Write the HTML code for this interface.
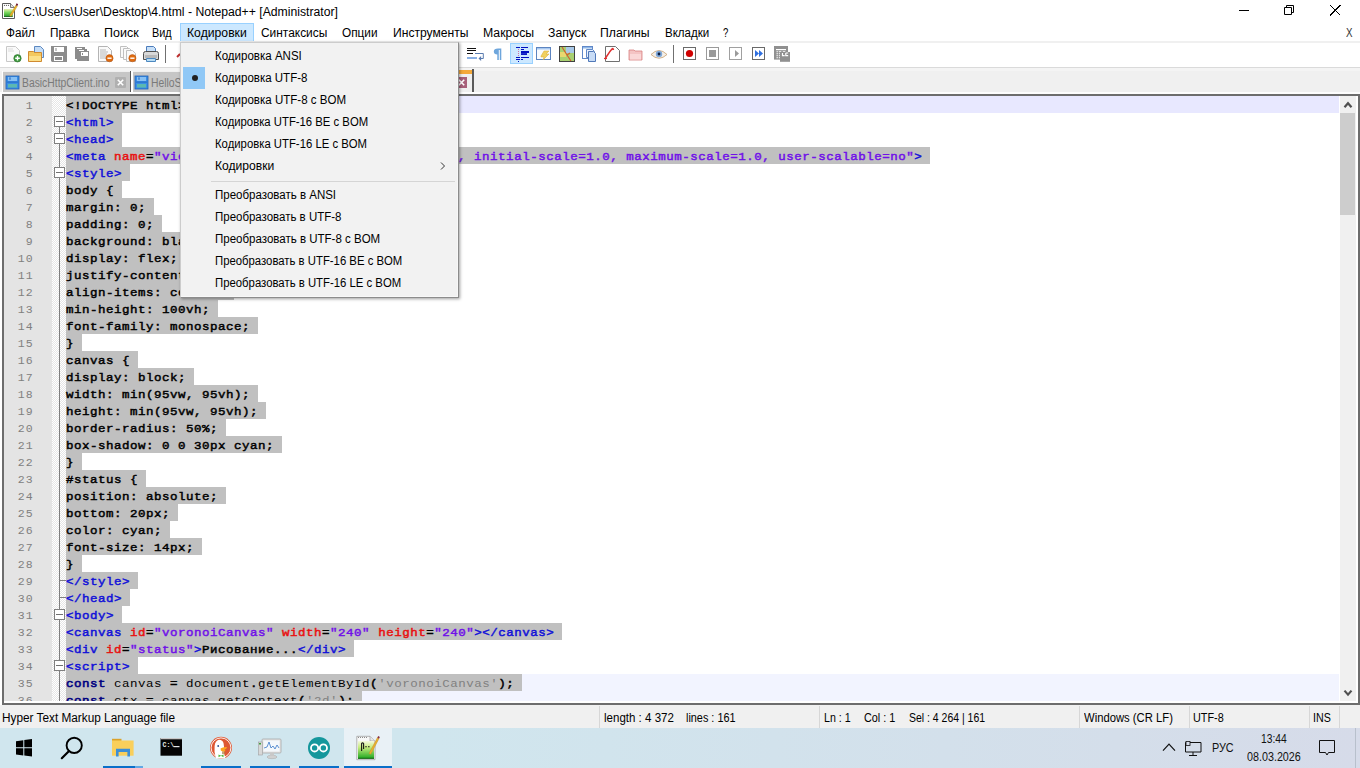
<!DOCTYPE html>
<html><head><meta charset="utf-8">
<style>
*{box-sizing:border-box}
html,body{margin:0;padding:0}
body{width:1360px;height:768px;overflow:hidden;position:relative;background:#fff;font-family:"Liberation Sans",sans-serif;font-size:12px;color:#000}
.ab{position:absolute}
#title{left:0;top:0;width:1360px;height:22px;background:#fff}
#title .tx{position:absolute;left:24px;top:4px;font-size:12.2px;line-height:14px;white-space:nowrap;color:#000}
#menubar{left:0;top:22px;width:1360px;height:19px;background:#fff}
.mi{position:absolute;top:3px;line-height:14px;white-space:nowrap}
#menusep{left:0;top:41px;width:1360px;height:2px;background:#f0f0f0}
#toolbar{left:0;top:43px;width:1360px;height:24px;background:#fff}
#tbline{left:0;top:67px;width:1360px;height:1px;background:#dadada}
#tabbar{left:0;top:68px;width:1360px;height:24px;background:#f0f0f0}
#tabwhite{left:0;top:92px;width:1360px;height:2px;background:#fdfdfd}
#editor{left:2px;top:94px;width:1358px;height:611px;background:#fff;border:2px solid #6d6d6d}
#lnm{left:4px;top:96px;width:48px;height:605px;background:#e4e4e4}
#fm{left:52px;top:96px;width:14px;height:605px;background-color:#fff;background-image:linear-gradient(45deg,#e6e6e6 25%,transparent 25%,transparent 75%,#e6e6e6 75%),linear-gradient(45deg,#e6e6e6 25%,transparent 25%,transparent 75%,#e6e6e6 75%);background-size:2px 2px;background-position:0 0,1px 1px}
#codeclip{left:0;top:96px;width:1340px;height:605px;overflow:hidden}
#codeclip>div{position:absolute}
.sel{left:66px;height:17px;background:#c0c0c0}
.curl{left:66px;width:1273px;height:17px;background:#e8e8ff}
.jsbg{left:66px;width:1273px;height:17px;background:#f2f4ff}
.cl{left:66px;height:17px;line-height:17px;margin-top:2px;letter-spacing:0.5px;font-family:"Liberation Mono",monospace;font-size:12.5px;transform:scaleY(0.9);transform-origin:0 13px;font-weight:normal;-webkit-text-stroke:0.5px currentColor;white-space:pre;color:#000}
.lnum{left:4px;width:29.8px;height:17px;line-height:17px;margin-top:1px;letter-spacing:1.1px;text-align:right;font-family:"Liberation Mono",monospace;font-size:11.5px;color:#808080;white-space:pre}
.t{color:#1010d8}.a{color:#e81010}.v{color:#7010e8}.k{color:#000}
.j{color:#000;-webkit-text-stroke:0}.n{color:#000080;-webkit-text-stroke:0.6px #000080}.s{color:#808080;-webkit-text-stroke:0}.y{color:#000}
.fvl{position:absolute;left:59px;width:1px;background:#808080}
.fbox{position:absolute;left:54px;width:11px;height:11px;border:1px solid #808080;background:#fff}
.fbox i{position:absolute;left:1px;top:4px;width:7px;height:1px;background:#707070}
.ftick{position:absolute;left:59px;width:7px;height:1px;background:#808080}
#vscroll{left:1340px;top:96px;width:16px;height:605px;background:#f0f0f0}
#thumb{left:1340px;top:113px;width:15px;height:102px;background:#cdcdcd}
#status{left:0;top:705px;width:1360px;height:23px;background:#f0f0f0}
.st{position:absolute;top:9px;line-height:14px;white-space:nowrap;font-size:12px}
.ssep{position:absolute;top:1px;width:1px;height:22px;background:#d7d7d7}
#taskbar{left:0;top:728px;width:1360px;height:40px;background:linear-gradient(90deg,#d0e6ee 0%,#d0e6ee 32%,#d2e2ec 57%,#d4deea 82%,#d6dbe9 100%)}
#dropdown{left:180px;top:42px;width:279px;height:256px;background:#f2f2f2;border:1px solid #cccccc;border-right:1px solid #8c8c8c;border-bottom:1px solid #8c8c8c;box-shadow:1px 1px 3px rgba(0,0,0,0.38), inset -1px -1px 0 #f8f8f8}
.dd{position:absolute;left:34px;line-height:14px;white-space:nowrap;font-size:11.5px}
</style></head>
<body>
<div id="title" class="ab">
  <svg class="ab" style="left:0;top:0" width="22" height="22">
    <defs><linearGradient id="tig" x1="0" y1="0" x2="0" y2="1"><stop offset="0" stop-color="#e8eeb0"/><stop offset="0.45" stop-color="#7cd860"/><stop offset="1" stop-color="#2a9a2a"/></linearGradient></defs>
    <path d="M2.5 3.5H10.5L14.5 7.5V18.5H2.5Z" fill="#fff" stroke="#5a5a5a" stroke-width="1"/>
    <path d="M10.5 3.5V7.5H14.5" fill="#e0e0e0" stroke="#5a5a5a" stroke-width="0.8"/>
    <circle cx="4.5" cy="5.3" r="0.6" fill="#555"/><circle cx="6.5" cy="5.3" r="0.6" fill="#555"/><circle cx="8.5" cy="5.3" r="0.6" fill="#555"/>
    <rect x="4" y="9" width="8.7" height="7.6" fill="url(#tig)"/>
    <rect x="4" y="16" width="8.7" height="0.8" fill="#0a5a10"/>
    <path d="M9.6 15.6L15.8 5.2L17.3 6.1L11.2 16.4Z" fill="#e8b52a" stroke="#b88018" stroke-width="0.4"/>
    <path d="M15.8 5.2L16.6 3.3L18.1 4.2L17.3 6.1Z" fill="#6a1028"/>
  </svg>
  <svg class="ab" style="left:0;top:0" width="1360" height="22">
    <rect x="1239" y="10" width="10" height="1" fill="#000"/>
    <path d="M1284.5 7.5h7v7h-7z M1286.5 7.5v-2h7v7h-2" fill="none" stroke="#000" stroke-width="1"/>
    <path d="M1330 5L1340.5 15.5M1340.5 5L1330 15.5" stroke="#000" stroke-width="1.1" shape-rendering="crispEdges"/>
  </svg>
</div>

<div id="menubar" class="ab">
  <div class="ab" style="left:180px;top:1px;width:74px;height:19px;background:#cce8ff;border:1px solid #99d1ff"></div>
</div>
<div id="menusep" class="ab"></div>

<div id="toolbar" class="ab">
<!-- toolbar icons; coordinates relative to toolbar top=43 -->
<svg class="ab" style="left:0;top:0" width="800" height="24" viewBox="0 43 800 24">
 <!-- new -->
 <path d="M6.5 46.5h9l4 4v11h-13z" fill="#fafafa" stroke="#c8c8c8"/>
 <path d="M8 49h5M8 51h6" stroke="#dcdcdc"/>
 <circle cx="17.5" cy="58.3" r="3.7" fill="#3c9a3c" stroke="#2a6e2a" stroke-width="0.6"/>
 <path d="M17.5 56v4.6M15.2 58.3h4.6" stroke="#fff" stroke-width="1.4"/>
 <!-- open -->
 <path d="M34.5 46.5h6l3 3v8h-9z" fill="#c4dcf6" stroke="#5c88c0"/>
 <path d="M28.5 51.5h5l1 1h7v9h-13z" fill="#f3c85e" stroke="#d08a30"/>
 <rect x="29" y="56" width="12" height="5" fill="#fbe08a"/>
 <!-- save -->
 <path d="M51 46h16v16h-15l-1-1z" fill="#8c8c8c"/>
 <rect x="54" y="47" width="10" height="5" fill="#fff"/>
 <rect x="55.5" y="48" width="1" height="3" fill="#8c8c8c"/>
 <rect x="54" y="56" width="9" height="5" fill="#fff"/>
 <rect x="55" y="57" width="7" height="3" fill="#8c8c8c"/>
 <!-- save all -->
 <path d="M75 47h10v2h2v2h2v10h-12v-2h-2z" fill="#8c8c8c"/>
 <rect x="77" y="48" width="5" height="1" fill="#fff"/>
 <rect x="79" y="50" width="5" height="1" fill="#fff"/>
 <rect x="81" y="52" width="7" height="4" fill="#fff"/>
 <rect x="82" y="53" width="1" height="2" fill="#8c8c8c"/>
 <!-- close -->
 <path d="M98.5 46.5h9l4 4v11h-13z" fill="#fafafa" stroke="#b4b4b4"/>
 <path d="M100 50h6M100 52h8M100 54h7M100 56h6M100 58h6" stroke="#9a9a9a" stroke-width="0.7"/>
 <circle cx="109.5" cy="58.2" r="3.6" fill="#e06c10" stroke="#b05010" stroke-width="0.5"/>
 <rect x="107.4" y="57.5" width="4.2" height="1.4" fill="#fff"/>
 <!-- close all -->
 <path d="M120.5 46.5h6l2 2v9h-8z" fill="#fafafa" stroke="#c0c0c0"/>
 <path d="M123.5 48.5h6l2 2v9h-8z" fill="#fafafa" stroke="#c0c0c0"/>
 <path d="M126.5 50.5h6l3 3v8h-9z" fill="#fafafa" stroke="#c0c0c0"/>
 <circle cx="132.4" cy="58.2" r="3.6" fill="#e06c10" stroke="#b05010" stroke-width="0.5"/>
 <rect x="130.3" y="57.5" width="4.2" height="1.4" fill="#fff"/>
 <!-- print -->
 <path d="M146.5 46.5h7l2 2v5h-9z" fill="#c8e0f8" stroke="#4c7cbc"/>
 <path d="M143.5 53.5q0-2 2-2h11q2 0 2 2v6h-15z" fill="#d8d8d8" stroke="#505050"/>
 <rect x="145" y="55" width="12" height="3" fill="#b8b8b8"/>
 <path d="M146.5 58.5h9v3h-9z" fill="#b8dcf4" stroke="#4c88c0"/>
 <!-- sep -->
 <rect x="165" y="45" width="1" height="18" fill="#707070"/>
 <!-- partially hidden cut icon -->
 <path d="M177 57l3-3" stroke="#c03030" stroke-width="2"/>
 <!-- word wrap -->
 <rect x="467" y="48" width="9" height="1" fill="#111"/>
 <rect x="467" y="50" width="9" height="1" fill="#111"/>
 <rect x="467" y="53" width="6" height="1" fill="#111"/>
 <path d="M475 53.5h8.3v5h-4" fill="none" stroke="#5a7cb0" stroke-width="1"/>
 <path d="M478.5 58.5l2.6-2.6v5.2z" fill="#5a7cb0"/>
 <rect x="467" y="57" width="10" height="2" fill="#8ab0e4"/>
<!-- pilcrow -->
 <path d="M498 48.5h3.3v11.4h-1.5v-10h-1v10h-1.5v-5.4q-3.5 0-3.5-3t4.2-3z" fill="#6ea6dc"/>
 <!-- indent guide (active) -->
 <rect x="510.5" y="43.5" width="22" height="20" fill="#cce8ff" stroke="#99d1ff"/>
 <path d="M516 47.5h4M521 47.5h7M521 49.5h3M521 51.5h8M521 54h6M516 57.5h4M521 57.5h8M516 59.5h4M521 59.5h2" stroke="#0010c0" stroke-width="1.1"/>
 <rect x="521" y="51" width="8" height="2" fill="#0010c0"/>
 <rect x="521" y="53.3" width="6" height="1.6" fill="#0010c0"/>
 <path d="M518.5 49v8" stroke="#d070a0" stroke-dasharray="1 1"/>
 <rect x="518" y="61" width="1" height="1" fill="#0010c0"/>
 <!-- UDL -->
 <rect x="536.5" y="47.5" width="14" height="12" fill="#f8fbff" stroke="#5c84c0"/>
 <rect x="537" y="48" width="13" height="1.5" fill="#a8c8f0"/>
 <path d="M541 56l3-5h5l-3 3h3l-6 6 1-3h-3z" fill="#f0d060" stroke="#d8a830" stroke-width="0.5"/>
 <!-- doc map -->
 <rect x="559.5" y="46.5" width="15" height="15" fill="#a8d070" stroke="#404040"/>
 <rect x="566" y="47" width="8" height="6" fill="#a8c8e8"/>
 <rect x="560" y="52" width="6" height="5" fill="#e8d870"/>
 <path d="M562 47l5 8 4 6M567 55l3-2" stroke="#d06030" stroke-width="1.2" fill="none"/>
 <!-- function list -->
 <rect x="582.5" y="46.5" width="10" height="12" fill="#fff" stroke="#6088c8"/>
 <rect x="583" y="47" width="9" height="1.5" fill="#90b8e8"/>
 <path d="M586.5 49.5h6l2 2v6h-8z" fill="#e8f0fc" stroke="#6088c8"/>
 <path d="M588.5 51.5h5l2 2v8h-7z" fill="#c8dcf6" stroke="#5078b8"/>
 <!-- folder as workspace -->
 <path d="M605.5 46.5h10l4 4v11h-14z" fill="#fff" stroke="#707070"/>
 <path d="M605 59c2-3 4-7 7-10q1-1 1.5 1" fill="none" stroke="#e03030" stroke-width="1.6"/>
 <path d="M604 58.5h3" stroke="#e03030" stroke-width="1.2"/>
 <!-- pink folder -->
 <path d="M629 50h5l1 1h7v9h-13z" fill="#f4c4c4" stroke="#d88080" stroke-width="0.8"/>
 <rect x="630" y="54" width="11" height="5.5" fill="#fad8d8"/>
 <!-- eye -->
 <path d="M651 54.5q8-8 16 0q-8 7.5-16 0z" fill="#f4efe8" stroke="#c8a070" stroke-width="0.8"/>
 <circle cx="659" cy="54" r="3.2" fill="#80a8d8"/>
 <circle cx="659" cy="54" r="1.4" fill="#102040"/>
 <!-- sep -->
 <rect x="673" y="45" width="1" height="18" fill="#707070"/>
 <!-- record -->
 <rect x="683.5" y="47.5" width="12" height="12" fill="#fff" stroke="#6a6a6a"/>
 <circle cx="689.5" cy="53.5" r="3.6" fill="#d00000"/>
 <!-- stop -->
 <rect x="706.5" y="47.5" width="12" height="12" fill="#fff" stroke="#9a9a9a"/>
 <rect x="709" y="50" width="7" height="7" fill="#9a9a9a"/>
 <!-- play -->
 <rect x="729.5" y="47.5" width="12" height="12" fill="#fff" stroke="#a0a0a0"/>
 <path d="M735 50l4 3.5-4 3.5z" fill="#9a9a9a"/>
 <!-- play multi -->
 <rect x="752.5" y="47.5" width="12" height="12" fill="#fff" stroke="#6a6a6a"/>
 <path d="M755 50l4 3.5-4 3.5zM759 50l4 3.5-4 3.5z" fill="#3070e0"/>
 <!-- save macro -->
 <rect x="774" y="46" width="14" height="13.6" fill="#909090"/>
 <rect x="776" y="49" width="10" height="1.2" fill="#fff"/>
 <path d="M776.5 51.8h1.4M778.8 51.8h2.5M782.8 51.8h2.5M776.5 53.8h1.4M778.8 53.8h1.4M776.5 55.8h1.4M778.8 55.8h1.4M776.5 57.8h1.4M778.8 57.8h1.4" stroke="#fff" stroke-width="1.1"/>
 <rect x="780" y="52" width="10" height="9.8" fill="#909090"/>
 <path d="M782.5 53v2.6h2.2M785.8 53h2.4M785.8 53v2.6h2.4" stroke="#fff" stroke-width="1.2" fill="none"/>
</svg>

</div>
<div id="tbline" class="ab"></div>
<div id="tabbar" class="ab">
<div class="ab" style="left:0;top:0;width:1360px;height:3px;background:#f4f4f4"></div>
<!-- tab1 -->
<div class="ab" style="left:2px;top:3px;width:1px;height:21px;background:#fff"></div>
<div class="ab" style="left:3px;top:4px;width:127px;height:20px;background:#c6c6c6"></div>
<div class="ab" style="left:130px;top:3px;width:1px;height:21px;background:#555"></div>
<div class="ab" style="left:131px;top:3px;width:2px;height:21px;background:#fff"></div>
<!-- tab2 -->
<div class="ab" style="left:133px;top:4px;width:200px;height:20px;background:#c6c6c6"></div>
<!-- active tab (partially hidden) -->
<div class="ab" style="left:300px;top:2px;width:172px;height:22px;background:#f0f0f0"></div>
<div class="ab" style="left:300px;top:2px;width:172px;height:4px;background:#f4a93a"></div>
<div class="ab" style="left:472px;top:1px;width:2px;height:23px;background:#5a5a5a"></div>
<svg class="ab" style="left:0;top:0" width="480" height="24" viewBox="0 68 480 24">
 <!-- tab1 save icon -->
 <rect x="6" y="76" width="13" height="13" fill="#3a8ee6" stroke="#1f5fb5" stroke-width="0.8"/>
 <rect x="8" y="77" width="9" height="4" fill="#86c0f4"/>
 <rect x="9.5" y="77.3" width="1" height="2.5" fill="#1f5fb5"/>
 <rect x="7" y="81.5" width="11" height="1.2" fill="#2a70c8"/>
 <rect x="8" y="84" width="9" height="3.5" fill="#5cb8b0"/>
 <!-- tab1 close -->
 <rect x="115" y="77" width="11" height="11" rx="1" fill="#b0b0b0"/>
 <path d="M117.8 79.8l5.4 5.4M123.2 79.8l-5.4 5.4" stroke="#fff" stroke-width="1.6"/>
 <!-- tab2 save icon -->
 <rect x="135" y="76" width="13" height="13" fill="#3a8ee6" stroke="#1f5fb5" stroke-width="0.8"/>
 <rect x="137" y="77" width="9" height="4" fill="#86c0f4"/>
 <rect x="138.5" y="77.3" width="1" height="2.5" fill="#1f5fb5"/>
 <rect x="136" y="81.5" width="11" height="1.2" fill="#2a70c8"/>
 <rect x="137" y="84" width="9" height="3.5" fill="#5cb8b0"/>
 <!-- active close -->
 <rect x="456" y="77" width="11" height="11" fill="#a8607a"/>
 <path d="M458.8 79.8l5.4 5.4M464.2 79.8l-5.4 5.4" stroke="#fff" stroke-width="1.6"/>
</svg>

</div>
<div id="tabwhite" class="ab"></div>
<div class="ab" style="left:21.90px;top:76.84px;font-size:12px;line-height:12px;white-space:pre;color:#7a7a7a;transform-origin:0 0;transform:scaleX(0.8619);">BasicHttpClient.ino</div>
<div class="ab" style="left:150.90px;top:76.84px;font-size:12px;line-height:12px;white-space:pre;color:#7a7a7a;transform-origin:0 0;transform:scaleX(0.8619);">HelloServer.ino</div>

<div id="editor" class="ab"></div>
<div id="lnm" class="ab"></div>
<div id="fm" class="ab"></div>
<div id="codeclip" class="ab">
<div class="curl" style="top:0px"></div>
<div class="sel" style="top:0px;width:128px"></div>
<div class="sel" style="top:17px;width:56px"></div>
<div class="sel" style="top:34px;width:56px"></div>
<div class="sel" style="top:51px;width:864px"></div>
<div class="sel" style="top:68px;width:64px"></div>
<div class="sel" style="top:85px;width:56px"></div>
<div class="sel" style="top:102px;width:88px"></div>
<div class="sel" style="top:119px;width:96px"></div>
<div class="sel" style="top:136px;width:152px"></div>
<div class="sel" style="top:153px;width:120px"></div>
<div class="sel" style="top:170px;width:200px"></div>
<div class="sel" style="top:187px;width:168px"></div>
<div class="sel" style="top:204px;width:152px"></div>
<div class="sel" style="top:221px;width:192px"></div>
<div class="sel" style="top:238px;width:16px"></div>
<div class="sel" style="top:255px;width:72px"></div>
<div class="sel" style="top:272px;width:128px"></div>
<div class="sel" style="top:289px;width:192px"></div>
<div class="sel" style="top:306px;width:200px"></div>
<div class="sel" style="top:323px;width:160px"></div>
<div class="sel" style="top:340px;width:216px"></div>
<div class="sel" style="top:357px;width:16px"></div>
<div class="sel" style="top:374px;width:80px"></div>
<div class="sel" style="top:391px;width:160px"></div>
<div class="sel" style="top:408px;width:112px"></div>
<div class="sel" style="top:425px;width:104px"></div>
<div class="sel" style="top:442px;width:136px"></div>
<div class="sel" style="top:459px;width:16px"></div>
<div class="sel" style="top:476px;width:72px"></div>
<div class="sel" style="top:493px;width:64px"></div>
<div class="sel" style="top:510px;width:56px"></div>
<div class="sel" style="top:527px;width:496px"></div>
<div class="sel" style="top:544px;width:288px"></div>
<div class="sel" style="top:561px;width:72px"></div>
<div class="jsbg" style="top:578px"></div>
<div class="sel" style="top:578px;width:456px"></div>
<div class="jsbg" style="top:595px"></div>
<div class="sel" style="top:595px;width:296px"></div>
<div class="cl" style="top:0px"><span class="k">&lt;!DOCTYPE html&gt;</span></div>
<div class="lnum" style="top:0px">1</div>
<div class="cl" style="top:17px"><span class="t">&lt;html&gt;</span></div>
<div class="lnum" style="top:17px">2</div>
<div class="cl" style="top:34px"><span class="t">&lt;head&gt;</span></div>
<div class="lnum" style="top:34px">3</div>
<div class="cl" style="top:51px"><span class="t">&lt;meta</span><span class="a"> name</span><span class="k">=</span><span class="v">&quot;viewport&quot;</span><span class="a"> content</span><span class="k">=</span><span class="v">&quot;width=device-width, initial-scale=1.0, maximum-scale=1.0, user-scalable=no&quot;</span><span class="t">&gt;</span></div>
<div class="lnum" style="top:51px">4</div>
<div class="cl" style="top:68px"><span class="t">&lt;style&gt;</span></div>
<div class="lnum" style="top:68px">5</div>
<div class="cl" style="top:85px"><span class="k">body {</span></div>
<div class="lnum" style="top:85px">6</div>
<div class="cl" style="top:102px"><span class="k">margin: 0;</span></div>
<div class="lnum" style="top:102px">7</div>
<div class="cl" style="top:119px"><span class="k">padding: 0;</span></div>
<div class="lnum" style="top:119px">8</div>
<div class="cl" style="top:136px"><span class="k">background: black;</span></div>
<div class="lnum" style="top:136px">9</div>
<div class="cl" style="top:153px"><span class="k">display: flex;</span></div>
<div class="lnum" style="top:153px">10</div>
<div class="cl" style="top:170px"><span class="k">justify-content: center;</span></div>
<div class="lnum" style="top:170px">11</div>
<div class="cl" style="top:187px"><span class="k">align-items: center;</span></div>
<div class="lnum" style="top:187px">12</div>
<div class="cl" style="top:204px"><span class="k">min-height: 100vh;</span></div>
<div class="lnum" style="top:204px">13</div>
<div class="cl" style="top:221px"><span class="k">font-family: monospace;</span></div>
<div class="lnum" style="top:221px">14</div>
<div class="cl" style="top:238px"><span class="k">}</span></div>
<div class="lnum" style="top:238px">15</div>
<div class="cl" style="top:255px"><span class="k">canvas {</span></div>
<div class="lnum" style="top:255px">16</div>
<div class="cl" style="top:272px"><span class="k">display: block;</span></div>
<div class="lnum" style="top:272px">17</div>
<div class="cl" style="top:289px"><span class="k">width: min(95vw, 95vh);</span></div>
<div class="lnum" style="top:289px">18</div>
<div class="cl" style="top:306px"><span class="k">height: min(95vw, 95vh);</span></div>
<div class="lnum" style="top:306px">19</div>
<div class="cl" style="top:323px"><span class="k">border-radius: 50%;</span></div>
<div class="lnum" style="top:323px">20</div>
<div class="cl" style="top:340px"><span class="k">box-shadow: 0 0 30px cyan;</span></div>
<div class="lnum" style="top:340px">21</div>
<div class="cl" style="top:357px"><span class="k">}</span></div>
<div class="lnum" style="top:357px">22</div>
<div class="cl" style="top:374px"><span class="k">#status {</span></div>
<div class="lnum" style="top:374px">23</div>
<div class="cl" style="top:391px"><span class="k">position: absolute;</span></div>
<div class="lnum" style="top:391px">24</div>
<div class="cl" style="top:408px"><span class="k">bottom: 20px;</span></div>
<div class="lnum" style="top:408px">25</div>
<div class="cl" style="top:425px"><span class="k">color: cyan;</span></div>
<div class="lnum" style="top:425px">26</div>
<div class="cl" style="top:442px"><span class="k">font-size: 14px;</span></div>
<div class="lnum" style="top:442px">27</div>
<div class="cl" style="top:459px"><span class="k">}</span></div>
<div class="lnum" style="top:459px">28</div>
<div class="cl" style="top:476px"><span class="t">&lt;/style&gt;</span></div>
<div class="lnum" style="top:476px">29</div>
<div class="cl" style="top:493px"><span class="t">&lt;/head&gt;</span></div>
<div class="lnum" style="top:493px">30</div>
<div class="cl" style="top:510px"><span class="t">&lt;body&gt;</span></div>
<div class="lnum" style="top:510px">31</div>
<div class="cl" style="top:527px"><span class="t">&lt;canvas</span><span class="a"> id</span><span class="k">=</span><span class="v">&quot;voronoiCanvas&quot;</span><span class="a"> width</span><span class="k">=</span><span class="v">&quot;240&quot;</span><span class="a"> height</span><span class="k">=</span><span class="v">&quot;240&quot;</span><span class="t">&gt;&lt;/canvas&gt;</span></div>
<div class="lnum" style="top:527px">32</div>
<div class="cl" style="top:544px"><span class="t">&lt;div</span><span class="a"> id</span><span class="k">=</span><span class="v">&quot;status&quot;</span><span class="t">&gt;</span><span class="k">Рисование...</span><span class="t">&lt;/div&gt;</span></div>
<div class="lnum" style="top:544px">33</div>
<div class="cl" style="top:561px"><span class="t">&lt;script&gt;</span></div>
<div class="lnum" style="top:561px">34</div>
<div class="cl" style="top:578px"><span class="n">const</span><span class="j"> canvas </span><span class="y">=</span><span class="j"> document</span><span class="y">.</span><span class="j">getElementById</span><span class="y">(</span><span class="s">&#x27;voronoiCanvas&#x27;</span><span class="y">)</span><span class="y">;</span></div>
<div class="lnum" style="top:578px">35</div>
<div class="cl" style="top:595px"><span class="n">const</span><span class="j"> ctx </span><span class="y">=</span><span class="j"> canvas</span><span class="y">.</span><span class="j">getContext</span><span class="y">(</span><span class="s">&#x27;2d&#x27;</span><span class="y">)</span><span class="y">;</span></div>
<div class="lnum" style="top:595px">36</div>
<div class="fvl" style="top:31px;height:574px"></div>
<div class="fbox" style="top:20px"><i></i></div>
<div class="fbox" style="top:37px"><i></i></div>
<div class="fbox" style="top:71px"><i></i></div>
<div class="fbox" style="top:513px"><i></i></div>
<div class="fbox" style="top:564px"><i></i></div>
<div class="ftick" style="top:484px"></div>
<div class="ftick" style="top:501px"></div>
</div>
<div id="vscroll" class="ab"></div>
<div id="thumb" class="ab"></div>
<svg class="ab" style="left:1342px;top:99px" width="12" height="12"><path d="M2.5 8.2 L6 4.2 L9.5 8.2" fill="none" stroke="#505050" stroke-width="2.2"/></svg>
<svg class="ab" style="left:1342px;top:687px" width="12" height="12"><path d="M2.5 3.6 L6 7.6 L9.5 3.6" fill="none" stroke="#505050" stroke-width="2.2"/></svg>

<div id="status" class="ab">
  <div class="ssep" style="left:599px"></div>
  <div class="ssep" style="left:819px"></div>
  <div class="ssep" style="left:1079px"></div>
  <div class="ssep" style="left:1189px"></div>
  <div class="ssep" style="left:1309px"></div>
  <div class="ssep" style="left:1339px"></div>
</div>

<div id="taskbar" class="ab">
<svg class="ab" style="left:0;top:0" width="1360" height="40" viewBox="0 728 1360 40">
 <!-- windows logo -->
 <path d="M16 741.2 L23.3 740.2 V747.3 H16 Z M24.3 740 L32 739 V747.3 H24.3 Z M16 748.3 H23.3 V755.4 L16 754.4 Z M24.3 748.3 H32 V756.6 L24.3 755.6 Z" fill="#000"/>
 <!-- search -->
 <circle cx="74.2" cy="745.4" r="7.6" fill="none" stroke="#000" stroke-width="1.9"/>
 <path d="M68.8 751.2 L61.8 758.2" stroke="#000" stroke-width="2.2" stroke-linecap="round"/>
 <!-- explorer -->
 <rect x="112" y="738.8" width="9.5" height="3" fill="#dba22a"/>
 <rect x="112" y="740.5" width="21.6" height="15.2" fill="#f9cf5b"/>
 <path d="M116 756.5 V748.8 H130 V756.5 H127.4 V752 H118.6 V756.5 Z" fill="#3d8fd6"/>
 <rect x="103" y="766" width="32" height="2" fill="#0a6fc9"/>
 <rect x="135" y="766" width="8" height="2" fill="#62a8e4"/>
 <!-- cmd -->
 <rect x="160.5" y="738" width="21.5" height="17.7" fill="#050505"/>
 <rect x="160.5" y="738" width="21.5" height="1.3" fill="#c8c8c8"/>
 <text x="162.5" y="746.8" font-family="Liberation Mono" font-size="6.5" font-weight="bold" fill="#e8e8e8">C:\</text>
 <rect x="173.5" y="746" width="6" height="1.2" fill="#e8e8e8"/>
 <!-- duckduckgo -->
 <circle cx="221" cy="747.8" r="11" fill="#de5833"/>
 <circle cx="221" cy="747.8" r="9.9" fill="none" stroke="#fff" stroke-width="0.9"/>
 <path d="M216 758.5 Q213.8 752 214.6 746 Q215.2 740.5 219 739.8 Q222.8 739.8 223.6 743.5 Q224.3 747 224 750 Q223.8 754 225.5 758.5 Z" fill="#fff"/>
 <circle cx="218.2" cy="746" r="0.9" fill="#2d4f8e"/>
 <path d="M220.5 748.6 Q223.5 746.5 227.2 747.2 Q226.5 749 224.5 749.8 Q226 750.5 225 751.6 Q222.5 752 220.8 750.4 Z" fill="#fca420"/>
 <path d="M218.5 754.6 L221.2 755.8 L218.5 757.2 Z M223.5 754.4 L220.8 755.8 L223.5 757.2 Z" fill="#4cba3c"/>
 <rect x="222" y="751.5" width="3" height="2.6" fill="#b07a40" opacity="0.7"/>
 <rect x="201" y="766" width="40" height="2" fill="#0a6fc9"/>
 <!-- monitor -->
 <rect x="262" y="739" width="19" height="14" rx="1" fill="#e4e4e4" stroke="#a8a8a8" stroke-width="0.8"/>
 <rect x="263.5" y="740.5" width="16" height="11" fill="#f4f8fc"/>
 <path d="M264 748 L267 747 L269 742 L271 748 L273 746 L275 749 L277 745 L279 748" fill="none" stroke="#3a78c8" stroke-width="0.8"/>
 <rect x="258.5" y="742" width="4" height="13" fill="#d8d8d8" stroke="#a0a0a0" stroke-width="0.6"/>
 <rect x="259" y="743" width="2" height="1.5" fill="#40a040"/>
 <ellipse cx="272" cy="757" rx="5" ry="1.7" fill="#d0d0d0" stroke="#a8a8a8" stroke-width="0.5"/>
 <rect x="270" y="753" width="4" height="3" fill="#c8c8c8"/>
 <rect x="250" y="766" width="40" height="2" fill="#0a6fc9"/>
 <!-- arduino -->
 <circle cx="319" cy="747.9" r="11" fill="#15979c"/>
 <circle cx="314.6" cy="747.9" r="3.6" fill="none" stroke="#fff" stroke-width="1.8"/>
 <circle cx="323.4" cy="747.9" r="3.6" fill="none" stroke="#fff" stroke-width="1.8"/>
 <rect x="299" y="766" width="40" height="2" fill="#0a6fc9"/>
 <!-- notepad++ active -->
 <rect x="344" y="728" width="48" height="38" fill="#e9f1f6"/>
 <defs><linearGradient id="npg" x1="0" y1="0" x2="0" y2="1"><stop offset="0" stop-color="#f4f8e0"/><stop offset="0.35" stop-color="#c8ec80"/><stop offset="1" stop-color="#20a820"/></linearGradient></defs>
 <path d="M356.8 736.3 H370 L375 741.3 V759.7 H356.8 Z" fill="#f8f8f8" stroke="#a0a0a0" stroke-width="0.8"/>
 <path d="M358 737.5 h1 M360 737.5 h1 M362 737.5 h1 M364 737.5 h1 M366 737.5 h1" stroke="#707070" stroke-width="0.8"/>
 <path d="M370 736.5 V741 H374.5" fill="#e8e8e8" stroke="#909090" stroke-width="0.6"/>
 <rect x="358" y="741" width="16" height="17.5" fill="url(#npg)"/>
 <rect x="358" y="757.8" width="16" height="1" fill="#106010"/>
 <path d="M361.6 751 V743.5 Q362.5 742.2 363.6 743.5 V749" fill="none" stroke="#181818" stroke-width="1.1"/>
 <path d="M365.2 746.8 h1.6 M368 746.8 h1.6" stroke="#181818" stroke-width="1.1"/>
 <path d="M369 753.5 L377.3 737.8 L379 738.7 L370.7 754.3 Z" fill="#e8b030" stroke="#c08820" stroke-width="0.4"/>
 <path d="M377.3 737.8 L378.2 736 L379.9 736.9 L379 738.7 Z" fill="#8a3040"/>
 <rect x="344" y="766" width="48" height="2" fill="#0a6fc9"/>
 <!-- tray -->
 <path d="M1163 750.6 L1169 744.2 L1175 750.6" fill="none" stroke="#111" stroke-width="1.2"/>
 <path d="M1185.5 742.5 H1201 V752 H1185.5 Z" fill="none" stroke="#111" stroke-width="1"/>
 <path d="M1193 752 V755 M1189 755.5 H1197" stroke="#111" stroke-width="1"/>
 <rect x="1186" y="741.5" width="4" height="4" fill="#d6dcea" stroke="#111" stroke-width="0.8"/>
 <path d="M1319.5 740.5 H1334.5 V752.5 H1328.5 L1327 755 L1325.5 752.5 H1319.5 Z" fill="none" stroke="#111" stroke-width="1"/>
 <rect x="1355" y="728" width="1" height="40" fill="#b8c0cc"/>
</svg>

</div>

<div id="dropdown" class="ab">
  <div class="ab" style="left:2px;top:24px;width:22px;height:22px;background:#90c8f6"></div>
  <div class="ab" style="left:11px;top:32px;width:6px;height:6px;border-radius:50%;background:#202020"></div>
  <svg class="ab" style="left:258px;top:118px" width="8" height="10"><path d="M2 1.5 L5.5 5 L2 8.5" fill="none" stroke="#333" stroke-width="1"/></svg>
  <div class="ab" style="left:30px;top:138px;width:244px;height:1px;background:#d5d5d5"></div>
</div>
<div class="ab" style="left:23.30px;top:5.84px;font-size:12px;line-height:12px;white-space:pre;color:#000;transform-origin:0 0;transform:scaleX(1.0179);">C:\Users\User\Desktop\4.html - Notepad++ [Administrator]</div>
<div class="ab" style="left:6.30px;top:26.84px;font-size:12px;line-height:12px;white-space:pre;color:#000;transform-origin:0 0;transform:scaleX(0.9763);">Файл</div>
<div class="ab" style="left:49.60px;top:26.84px;font-size:12px;line-height:12px;white-space:pre;color:#000;transform-origin:0 0;transform:scaleX(0.9790);">Правка</div>
<div class="ab" style="left:103.50px;top:26.84px;font-size:12px;line-height:12px;white-space:pre;color:#000;transform-origin:0 0;transform:scaleX(1.0405);">Поиск</div>
<div class="ab" style="left:152.30px;top:26.84px;font-size:12px;line-height:12px;white-space:pre;color:#000;transform-origin:0 0;transform:scaleX(0.9078);">Вид</div>
<div class="ab" style="left:186.50px;top:26.84px;font-size:12px;line-height:12px;white-space:pre;color:#000;transform-origin:0 0;transform:scaleX(1.0170);">Кодировки</div>
<div class="ab" style="left:260.50px;top:26.84px;font-size:12px;line-height:12px;white-space:pre;color:#000;transform-origin:0 0;transform:scaleX(0.9933);">Синтаксисы</div>
<div class="ab" style="left:341.80px;top:26.84px;font-size:12px;line-height:12px;white-space:pre;color:#000;transform-origin:0 0;transform:scaleX(0.9834);">Опции</div>
<div class="ab" style="left:392.50px;top:26.84px;font-size:12px;line-height:12px;white-space:pre;color:#000;transform-origin:0 0;transform:scaleX(1.0087);">Инструменты</div>
<div class="ab" style="left:482.50px;top:26.84px;font-size:12px;line-height:12px;white-space:pre;color:#000;transform-origin:0 0;transform:scaleX(1.0210);">Макросы</div>
<div class="ab" style="left:547.90px;top:26.84px;font-size:12px;line-height:12px;white-space:pre;color:#000;transform-origin:0 0;transform:scaleX(1.0199);">Запуск</div>
<div class="ab" style="left:600.30px;top:26.84px;font-size:12px;line-height:12px;white-space:pre;color:#000;transform-origin:0 0;transform:scaleX(1.0175);">Плагины</div>
<div class="ab" style="left:664.60px;top:26.84px;font-size:12px;line-height:12px;white-space:pre;color:#000;transform-origin:0 0;transform:scaleX(0.9609);">Вкладки</div>
<div class="ab" style="left:722.90px;top:26.84px;font-size:12px;line-height:12px;white-space:pre;color:#000;transform-origin:0 0;transform:scaleX(0.7970);">?</div>
<div class="ab" style="left:1345.60px;top:26.84px;font-size:12px;line-height:12px;white-space:pre;color:#333;transform-origin:0 0;transform:scaleX(0.8125);">X</div>
<div class="ab" style="left:214.90px;top:49.84px;font-size:12px;line-height:12px;white-space:pre;color:#000;transform-origin:0 0;transform:scaleX(0.9607);">Кодировка ANSI</div>
<div class="ab" style="left:214.90px;top:71.84px;font-size:12px;line-height:12px;white-space:pre;color:#000;transform-origin:0 0;transform:scaleX(0.9590);">Кодировка UTF-8</div>
<div class="ab" style="left:214.90px;top:93.84px;font-size:12px;line-height:12px;white-space:pre;color:#000;transform-origin:0 0;transform:scaleX(0.9608);">Кодировка UTF-8 с BOM</div>
<div class="ab" style="left:214.90px;top:115.84px;font-size:12px;line-height:12px;white-space:pre;color:#000;transform-origin:0 0;transform:scaleX(0.9430);">Кодировка UTF-16 BE с BOM</div>
<div class="ab" style="left:214.90px;top:137.84px;font-size:12px;line-height:12px;white-space:pre;color:#000;transform-origin:0 0;transform:scaleX(0.9438);">Кодировка UTF-16 LE с BOM</div>
<div class="ab" style="left:214.90px;top:159.84px;font-size:12px;line-height:12px;white-space:pre;color:#000;transform-origin:0 0;transform:scaleX(1.0085);">Кодировки</div>
<div class="ab" style="left:214.90px;top:188.84px;font-size:12px;line-height:12px;white-space:pre;color:#000;transform-origin:0 0;transform:scaleX(0.9592);">Преобразовать в ANSI</div>
<div class="ab" style="left:214.90px;top:210.84px;font-size:12px;line-height:12px;white-space:pre;color:#000;transform-origin:0 0;transform:scaleX(0.9561);">Преобразовать в UTF-8</div>
<div class="ab" style="left:214.90px;top:232.84px;font-size:12px;line-height:12px;white-space:pre;color:#000;transform-origin:0 0;transform:scaleX(0.9593);">Преобразовать в UTF-8 с BOM</div>
<div class="ab" style="left:214.90px;top:254.84px;font-size:12px;line-height:12px;white-space:pre;color:#000;transform-origin:0 0;transform:scaleX(0.9448);">Преобразовать в UTF-16 BE с BOM</div>
<div class="ab" style="left:214.90px;top:276.84px;font-size:12px;line-height:12px;white-space:pre;color:#000;transform-origin:0 0;transform:scaleX(0.9457);">Преобразовать в UTF-16 LE с BOM</div>
<div class="ab" style="left:2.30px;top:711.84px;font-size:12px;line-height:12px;white-space:pre;color:#000;transform-origin:0 0;transform:scaleX(0.9835);">Hyper Text Markup Language file</div>
<div class="ab" style="left:604.00px;top:711.84px;font-size:12px;line-height:12px;white-space:pre;color:#000;transform-origin:0 0;transform:scaleX(0.9608);">length : 4 372</div>
<div class="ab" style="left:686.30px;top:711.84px;font-size:12px;line-height:12px;white-space:pre;color:#000;transform-origin:0 0;transform:scaleX(0.9049);">lines : 161</div>
<div class="ab" style="left:823.60px;top:711.84px;font-size:12px;line-height:12px;white-space:pre;color:#000;transform-origin:0 0;transform:scaleX(0.8885);">Ln : 1</div>
<div class="ab" style="left:864.00px;top:711.84px;font-size:12px;line-height:12px;white-space:pre;color:#000;transform-origin:0 0;transform:scaleX(0.9020);">Col : 1</div>
<div class="ab" style="left:908.90px;top:711.84px;font-size:12px;line-height:12px;white-space:pre;color:#000;transform-origin:0 0;transform:scaleX(0.8727);">Sel : 4 264 | 161</div>
<div class="ab" style="left:1084.00px;top:711.84px;font-size:12px;line-height:12px;white-space:pre;color:#000;transform-origin:0 0;transform:scaleX(0.9388);">Windows (CR LF)</div>
<div class="ab" style="left:1193.30px;top:711.84px;font-size:12px;line-height:12px;white-space:pre;color:#000;transform-origin:0 0;transform:scaleX(0.9029);">UTF-8</div>
<div class="ab" style="left:1313.30px;top:711.84px;font-size:12px;line-height:12px;white-space:pre;color:#000;transform-origin:0 0;transform:scaleX(0.8900);">INS</div>
<div class="ab" style="left:1212.10px;top:741.84px;font-size:12px;line-height:12px;white-space:pre;color:#111;transform-origin:0 0;transform:scaleX(0.9023);">РУС</div>
<div class="ab" style="left:1261.10px;top:732.84px;font-size:12px;line-height:12px;white-space:pre;color:#111;transform-origin:0 0;transform:scaleX(0.8586);">13:44</div>
<div class="ab" style="left:1247.10px;top:750.84px;font-size:12px;line-height:12px;white-space:pre;color:#111;transform-origin:0 0;transform:scaleX(0.8959);">08.03.2026</div>
</body></html>
